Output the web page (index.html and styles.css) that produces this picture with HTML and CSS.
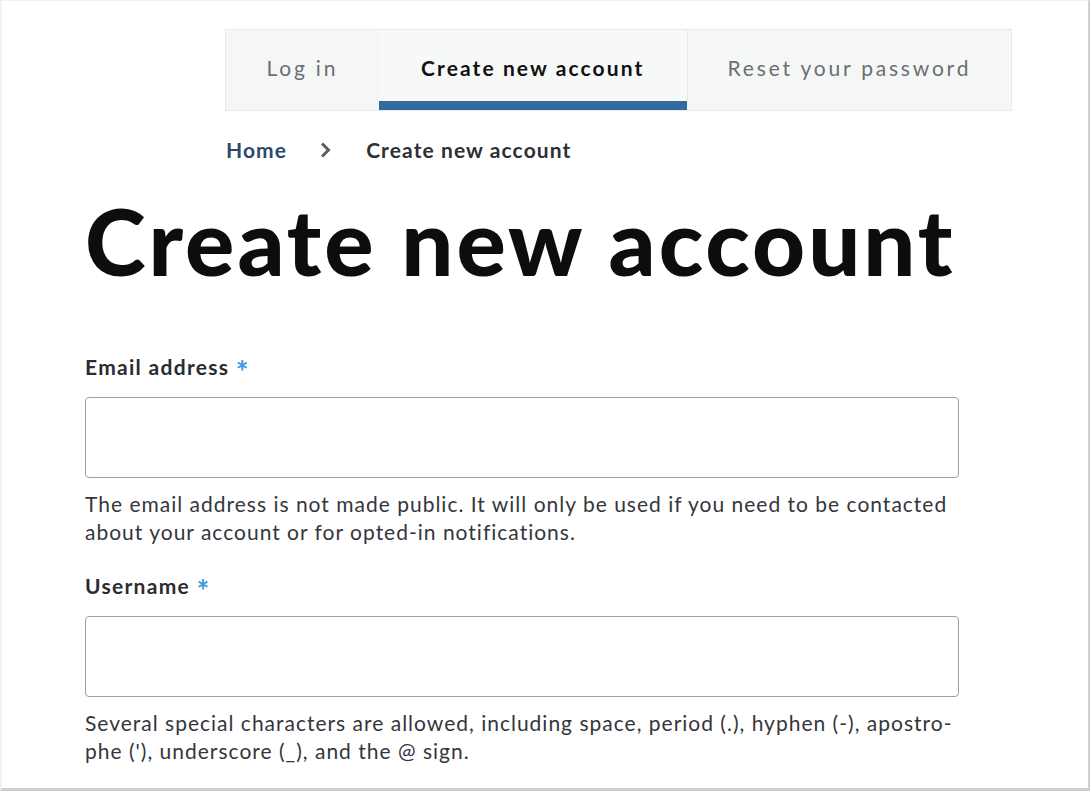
FILE: index.html
```html
<!DOCTYPE html>
<html lang="en">
<head>
    <meta charset="UTF-8">
    <meta name="viewport" content="width=device-width, initial-scale=1.0">
    <title>Create new account</title>
    <link rel="stylesheet" href="styles.css">
</head>
<body>
    <div class="page">
        <nav class="tabs">
            <a class="tab" href="#">Log in</a>
            <a class="tab active" href="#">Create new account</a>
            <a class="tab" href="#">Reset your password</a>
        </nav>

        <div class="breadcrumb">
            <a class="crumb-link" href="#">Home</a>
            <svg class="crumb-sep" width="12" height="16" viewBox="0 0 12 16">
                <path d="M2 1.5l6.5 6.5-6.5 6.5" fill="none" stroke="#5a5e63" stroke-width="3"/>
            </svg>
            <span class="crumb-current">Create new account</span>
        </div>

        <h1 class="title">Create new account</h1>

        <form class="form">
            <div class="field">
                <label class="label" for="mail">Email address <span class="req">*</span></label>
                <input class="input" id="mail" type="email">
                <p class="desc">The email address is not made public. It will only be used if you need to be contacted about your account or for opted-in notifications.</p>
            </div>
            <div class="field">
                <label class="label" for="name">Username <span class="req">*</span></label>
                <input class="input" id="name" type="text">
                <p class="desc">Several special characters are allowed, including space, period (.), hyphen (-), apostro&shy;phe ('), underscore (_), and the @ sign.</p>
            </div>
        </form>
    </div>
</body>
</html>
```

FILE: styles.css
```css
* {
    margin: 0;
    padding: 0;
    box-sizing: border-box;
}

body {
    background: #fff;
    font-family: Lato, "Liberation Sans", sans-serif;
    color: #232429;
}

.page {
    width: 1090px;
    height: 791px;
    overflow: hidden;
    border-top: 1px solid #f2f2f2;
    border-left: 2px solid #f2f2f2;
    border-right: 2px solid #d0d0d0;
    border-bottom: 3px solid #cfcfcf;
    padding: 28px 0 0 83px;
}

.tabs {
    display: flex;
    margin-left: 140px;
    width: 787px;
    background: #f5f7f7;
    border: 1px solid #e8eaea;
}

.tab {
    display: flex;
    align-items: center;
    justify-content: center;
    height: 80px;
    font-size: 21px;
    letter-spacing: 2.8px;
    color: #6b6e72;
    text-decoration: none;
    border-bottom: 9px solid transparent;
    padding-top: 3px;
}

.tab:nth-child(1) { width: 153px; }
.tab:nth-child(2) { width: 309px; }
.tab:nth-child(3) { width: 325px; border-left: 1px solid #e8eaea; }

.tab.active {
    color: #111;
    font-weight: 700;
    letter-spacing: 2.1px;
    background: #f7f8f8;
    border-bottom-color: #336b9f;
}

.breadcrumb {
    display: flex;
    align-items: center;
    margin: 26px 0 0 141px;
    font-size: 21px;
    font-weight: 700;
    letter-spacing: 1.1px;
}

.crumb-link {
    color: #2c4a6b;
    text-decoration: none;
}

.crumb-sep {
    margin: 0 34px 0 33px;
}

.crumb-current {
    color: #2d2f33;
}

.title {
    margin-top: 24px;
    font-size: 92px;
    font-weight: 900;
    letter-spacing: 3px;
    line-height: 110px;
    color: #0d0d0e;
}

.form {
    margin-top: 58px;
    width: 874px;
}

.field {
    margin-bottom: 27px;
}

.label {
    display: block;
    font-size: 21px;
    font-weight: 700;
    letter-spacing: 1.3px;
    color: #2a2c30;
    line-height: 26px;
}

.req {
    font-size: 30px;
    line-height: 20px;
    vertical-align: -8px;
    color: #3a9ad9;
}

.input {
    display: block;
    width: 100%;
    height: 81px;
    margin-top: 16px;
    border: 1px solid #9da0a5;
    border-radius: 4px;
    background: #fff;
}

.desc {
    margin-top: 12px;
    font-size: 21px;
    letter-spacing: 1px;
    line-height: 28px;
    color: #34363b;
}
```
